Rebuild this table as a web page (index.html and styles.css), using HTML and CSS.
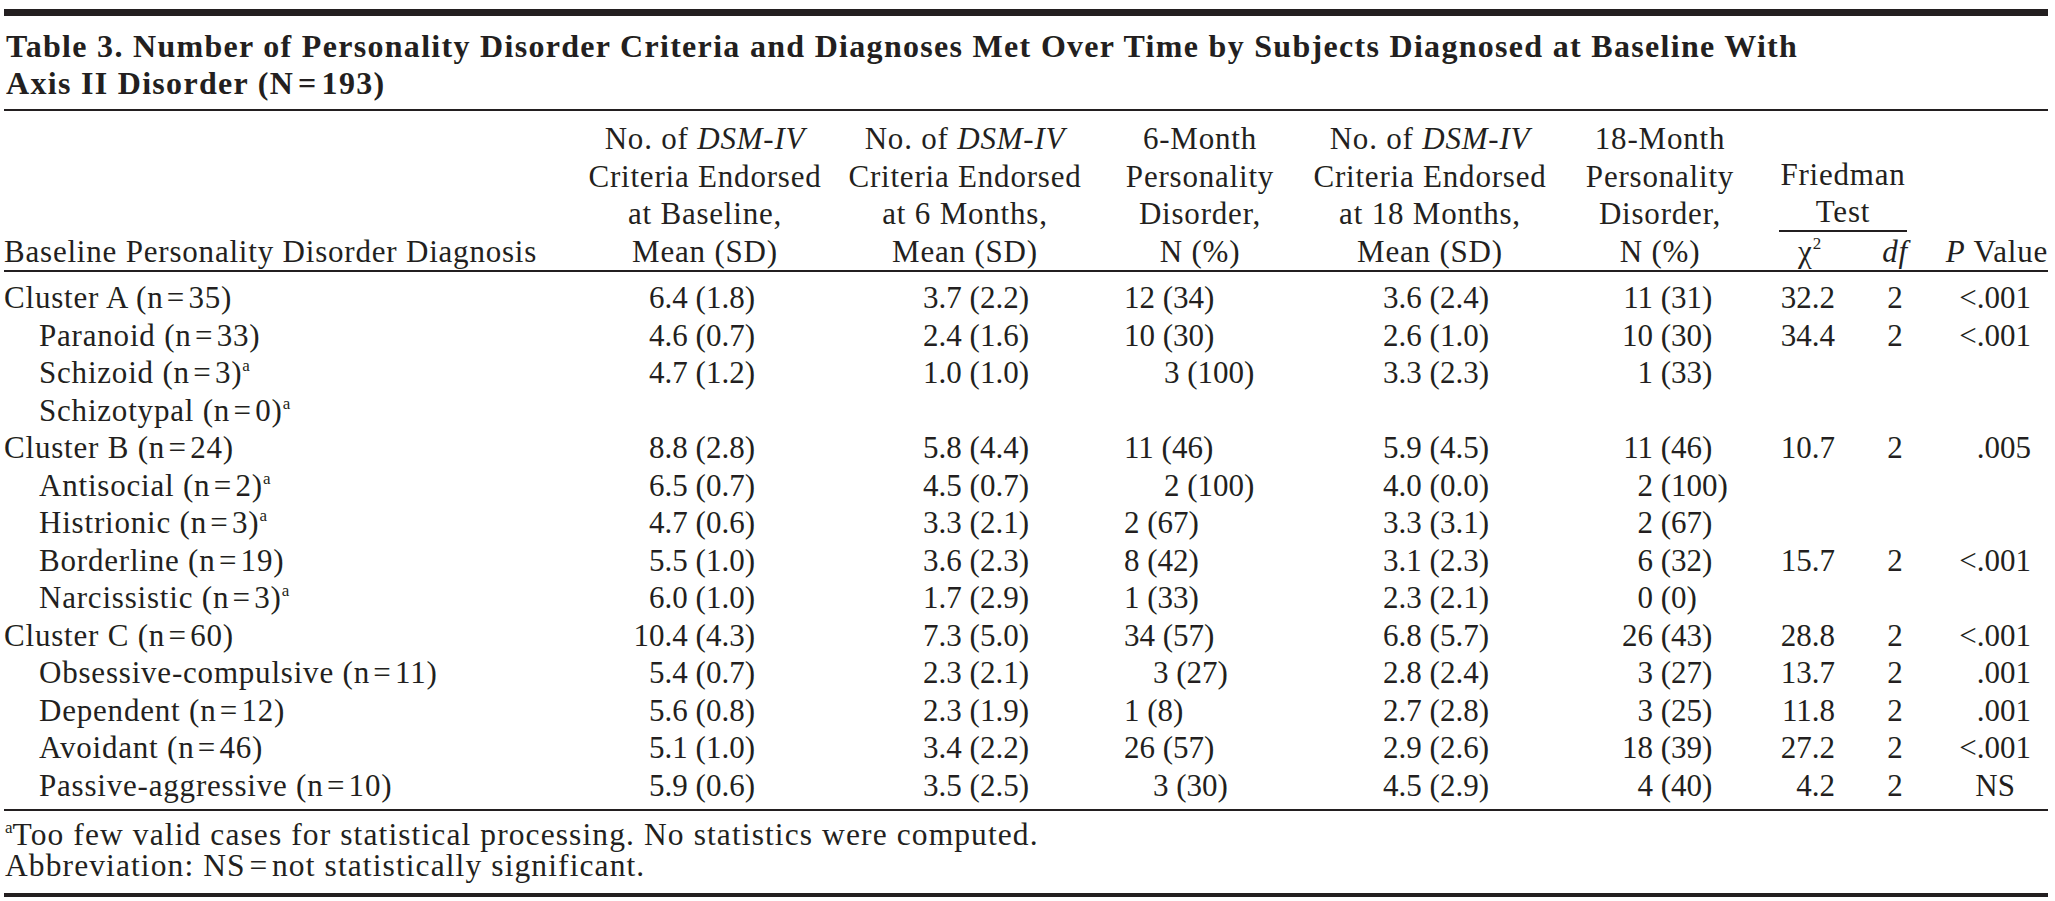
FILE: index.html
```html
<!DOCTYPE html>
<html lang="en">
<head>
<meta charset="utf-8">
<title>Table 3</title>
<link rel="stylesheet" href="styles.css">
</head>
<body>
<div class="page">
  <div class="topbar"></div>
  <h1 class="title">Table 3. Number of Personality Disorder Criteria and Diagnoses Met Over Time by Subjects Diagnosed at Baseline With<br>Axis II Disorder (N&#8202;=&#8202;193)</h1>
  <table class="tbl">
    <colgroup>
      <col class="w1"><col class="w2"><col class="w3"><col class="w4"><col class="w5"><col class="w6"><col class="w7"><col class="w8"><col class="w9">
    </colgroup>
    <thead>
      <tr class="hr1">
        <th rowspan="2" class="hl">Baseline Personality Disorder Diagnosis</th>
        <th rowspan="2" class="h2">No. of <i>DSM-IV</i><br>Criteria Endorsed<br>at Baseline,<br>Mean (SD)</th>
        <th rowspan="2" class="h3">No. of <i>DSM-IV</i><br>Criteria Endorsed<br>at 6 Months,<br>Mean (SD)</th>
        <th rowspan="2" class="h4">6-Month<br>Personality<br>Disorder,<br>N (%)</th>
        <th rowspan="2" class="h5">No. of <i>DSM-IV</i><br>Criteria Endorsed<br>at 18 Months,<br>Mean (SD)</th>
        <th rowspan="2" class="h6">18-Month<br>Personality<br>Disorder,<br>N (%)</th>
        <th colspan="2" class="hg"><div class="grp">Friedman<br>Test</div></th>
        <th rowspan="2" class="h9"><i>P</i> Value</th>
      </tr>
      <tr class="hr2">
        <th class="h7">χ<span class="sq">2</span></th>
        <th class="h8"><i>df</i></th>
      </tr>
    </thead>
    <tbody>
      <tr><td class="lab">Cluster A (n&#8202;=&#8202;35)</td><td class="v2">6.4 (1.8)</td><td class="v3">3.7 (2.2)</td><td class="v4">12 (34)</td><td class="v5">3.6 (2.4)</td><td class="v6"><span class="n">11</span> (31)</td><td class="v7">32.2</td><td class="v8">2</td><td class="v9">&lt;.001</td></tr>
      <tr><td class="lab sub">Paranoid (n&#8202;=&#8202;33)</td><td class="v2">4.6 (0.7)</td><td class="v3">2.4 (1.6)</td><td class="v4">10 (30)</td><td class="v5">2.6 (1.0)</td><td class="v6"><span class="n">10</span> (30)</td><td class="v7">34.4</td><td class="v8">2</td><td class="v9">&lt;.001</td></tr>
      <tr><td class="lab sub">Schizoid (n&#8202;=&#8202;3)<span class="sup">a</span></td><td class="v2">4.7 (1.2)</td><td class="v3">1.0 (1.0)</td><td class="v4 ind2">3 (100)</td><td class="v5">3.3 (2.3)</td><td class="v6"><span class="n">1</span> (33)</td><td class="v7"></td><td class="v8"></td><td class="v9"></td></tr>
      <tr><td class="lab sub">Schizotypal (n&#8202;=&#8202;0)<span class="sup">a</span></td><td class="v2"></td><td class="v3"></td><td class="v4"></td><td class="v5"></td><td class="v6"></td><td class="v7"></td><td class="v8"></td><td class="v9"></td></tr>
      <tr><td class="lab">Cluster B (n&#8202;=&#8202;24)</td><td class="v2">8.8 (2.8)</td><td class="v3">5.8 (4.4)</td><td class="v4">11 (46)</td><td class="v5">5.9 (4.5)</td><td class="v6"><span class="n">11</span> (46)</td><td class="v7">10.7</td><td class="v8">2</td><td class="v9">.005</td></tr>
      <tr><td class="lab sub">Antisocial (n&#8202;=&#8202;2)<span class="sup">a</span></td><td class="v2">6.5 (0.7)</td><td class="v3">4.5 (0.7)</td><td class="v4 ind2">2 (100)</td><td class="v5">4.0 (0.0)</td><td class="v6"><span class="n">2</span> (100)</td><td class="v7"></td><td class="v8"></td><td class="v9"></td></tr>
      <tr><td class="lab sub">Histrionic (n&#8202;=&#8202;3)<span class="sup">a</span></td><td class="v2">4.7 (0.6)</td><td class="v3">3.3 (2.1)</td><td class="v4">2 (67)</td><td class="v5">3.3 (3.1)</td><td class="v6"><span class="n">2</span> (67)</td><td class="v7"></td><td class="v8"></td><td class="v9"></td></tr>
      <tr><td class="lab sub">Borderline (n&#8202;=&#8202;19)</td><td class="v2">5.5 (1.0)</td><td class="v3">3.6 (2.3)</td><td class="v4">8 (42)</td><td class="v5">3.1 (2.3)</td><td class="v6"><span class="n">6</span> (32)</td><td class="v7">15.7</td><td class="v8">2</td><td class="v9">&lt;.001</td></tr>
      <tr><td class="lab sub">Narcissistic (n&#8202;=&#8202;3)<span class="sup">a</span></td><td class="v2">6.0 (1.0)</td><td class="v3">1.7 (2.9)</td><td class="v4">1 (33)</td><td class="v5">2.3 (2.1)</td><td class="v6"><span class="n">0</span> (0)</td><td class="v7"></td><td class="v8"></td><td class="v9"></td></tr>
      <tr><td class="lab">Cluster C (n&#8202;=&#8202;60)</td><td class="v2">10.4 (4.3)</td><td class="v3">7.3 (5.0)</td><td class="v4">34 (57)</td><td class="v5">6.8 (5.7)</td><td class="v6"><span class="n">26</span> (43)</td><td class="v7">28.8</td><td class="v8">2</td><td class="v9">&lt;.001</td></tr>
      <tr><td class="lab sub">Obsessive-compulsive (n&#8202;=&#8202;11)</td><td class="v2">5.4 (0.7)</td><td class="v3">2.3 (2.1)</td><td class="v4 ind1">3 (27)</td><td class="v5">2.8 (2.4)</td><td class="v6"><span class="n">3</span> (27)</td><td class="v7">13.7</td><td class="v8">2</td><td class="v9">.001</td></tr>
      <tr><td class="lab sub">Dependent (n&#8202;=&#8202;12)</td><td class="v2">5.6 (0.8)</td><td class="v3">2.3 (1.9)</td><td class="v4">1 (8)</td><td class="v5">2.7 (2.8)</td><td class="v6"><span class="n">3</span> (25)</td><td class="v7">11.8</td><td class="v8">2</td><td class="v9">.001</td></tr>
      <tr><td class="lab sub">Avoidant (n&#8202;=&#8202;46)</td><td class="v2">5.1 (1.0)</td><td class="v3">3.4 (2.2)</td><td class="v4">26 (57)</td><td class="v5">2.9 (2.6)</td><td class="v6"><span class="n">18</span> (39)</td><td class="v7">27.2</td><td class="v8">2</td><td class="v9">&lt;.001</td></tr>
      <tr><td class="lab sub">Passive-aggressive (n&#8202;=&#8202;10)</td><td class="v2">5.9 (0.6)</td><td class="v3">3.5 (2.5)</td><td class="v4 ind1">3 (30)</td><td class="v5">4.5 (2.9)</td><td class="v6"><span class="n">4</span> (40)</td><td class="v7">4.2</td><td class="v8">2</td><td class="v9 ns">NS</td></tr>
    </tbody>
  </table>
  <div class="notes">
    <p class="note"><span class="sup">a</span>Too few valid cases for statistical processing. No statistics were computed.</p>
    <p class="note">Abbreviation: NS&#8202;=&#8202;not statistically significant.</p>
  </div>
</div>
</body>
</html>
```

FILE: styles.css
```css
* { box-sizing: border-box; }
html, body { margin: 0; background: #ffffff; }
body {
  font-family: "Liberation Serif", "Times New Roman", serif;
  color: #231f20;
}
.page {
  width: 2055px;
  padding: 9px 7px 0 4px;
}
.topbar {
  height: 7px;
  background: #231f20;
}
.title {
  margin: 0;
  font-size: 32px;
  font-weight: 700;
  line-height: 37px;
  letter-spacing: 1.3px;
  padding: 12px 0 7px 2px;
  border-bottom: 2px solid #231f20;
}
.tbl {
  width: 2044px;
  margin-top: 9px;
  border-collapse: collapse;
  border-spacing: 0;
  table-layout: fixed;
  font-size: 31px;
  line-height: 37.5px;
}
.w1 { width: 576px; }
.w2 { width: 250px; }
.w3 { width: 270px; }
.w4 { width: 200px; }
.w5 { width: 260px; }
.w6 { width: 200px; }
.w7 { width: 100px; }
.w8 { width: 70px; }
.w9 { width: 118px; }

.tbl th {
  font-weight: 400;
  vertical-align: bottom;
  padding: 0;
  white-space: nowrap;
  letter-spacing: 0.8px;
}
.tbl thead { border-bottom: 2px solid #231f20; }
.hr1 { height: 112px; }
.hr2 { height: 38px; }
.hl { text-align: left; padding-left: 2px; }
.h2 { text-align: center; padding-right: 18px; }
.h3 { text-align: center; padding-left: 40px; }
.h4 { text-align: center; padding-right: 12px; }
.h5 { text-align: center; padding-left: 20px; }
.h6 { text-align: center; }
.h7 { text-align: center; }
.h8 { text-align: center; }
.h9 { text-align: right; padding-right: 3px; }
.hg { text-align: center; }
.grp {
  margin: 0 23px 0 19px;
  border-bottom: 2px solid #231f20;
  line-height: 37px;
}
.sq {
  font-size: 17px;
  vertical-align: 13px;
  line-height: 0;
}

.tbl td {
  padding: 0;
  white-space: nowrap;
}
.tbl tbody tr:first-child td { padding-top: 7px; }
.tbl tbody tr:last-child td { padding-bottom: 5px; }
.tbl tbody { border-bottom: 2px solid #231f20; }
.lab { text-align: left; padding-left: 1px; letter-spacing: 0.8px; }
.tbl td.sub { padding-left: 35px; }
.v2 { text-align: right; padding-right: 75px !important; }
.v3 { text-align: right; padding-right: 71px !important; }
.v4 { text-align: left; padding-left: 24px !important; }
.tbl td.ind1 { padding-left: 53px !important; }
.tbl td.ind2 { padding-left: 64px !important; }
.v5 { text-align: right; padding-right: 71px !important; }
.v6 { text-align: left; padding-left: 62px !important; }
.v7 { text-align: right; padding-right: 25px !important; }
.v8 { text-align: center; }
.v9 { text-align: right; padding-right: 17px !important; }
.tbl td.ns { padding-right: 33px !important; }
.n {
  display: inline-block;
  width: 31px;
  text-align: right;
}
.sup {
  font-size: 17px;
  vertical-align: 12px;
  line-height: 0;
  letter-spacing: 0;
}

.notes {
  padding: 8px 0 12px 1px;
  border-bottom: 4px solid #231f20;
}
.note {
  margin: 0;
  font-size: 31.5px;
  line-height: 31px;
  letter-spacing: 1.1px;
}
```
